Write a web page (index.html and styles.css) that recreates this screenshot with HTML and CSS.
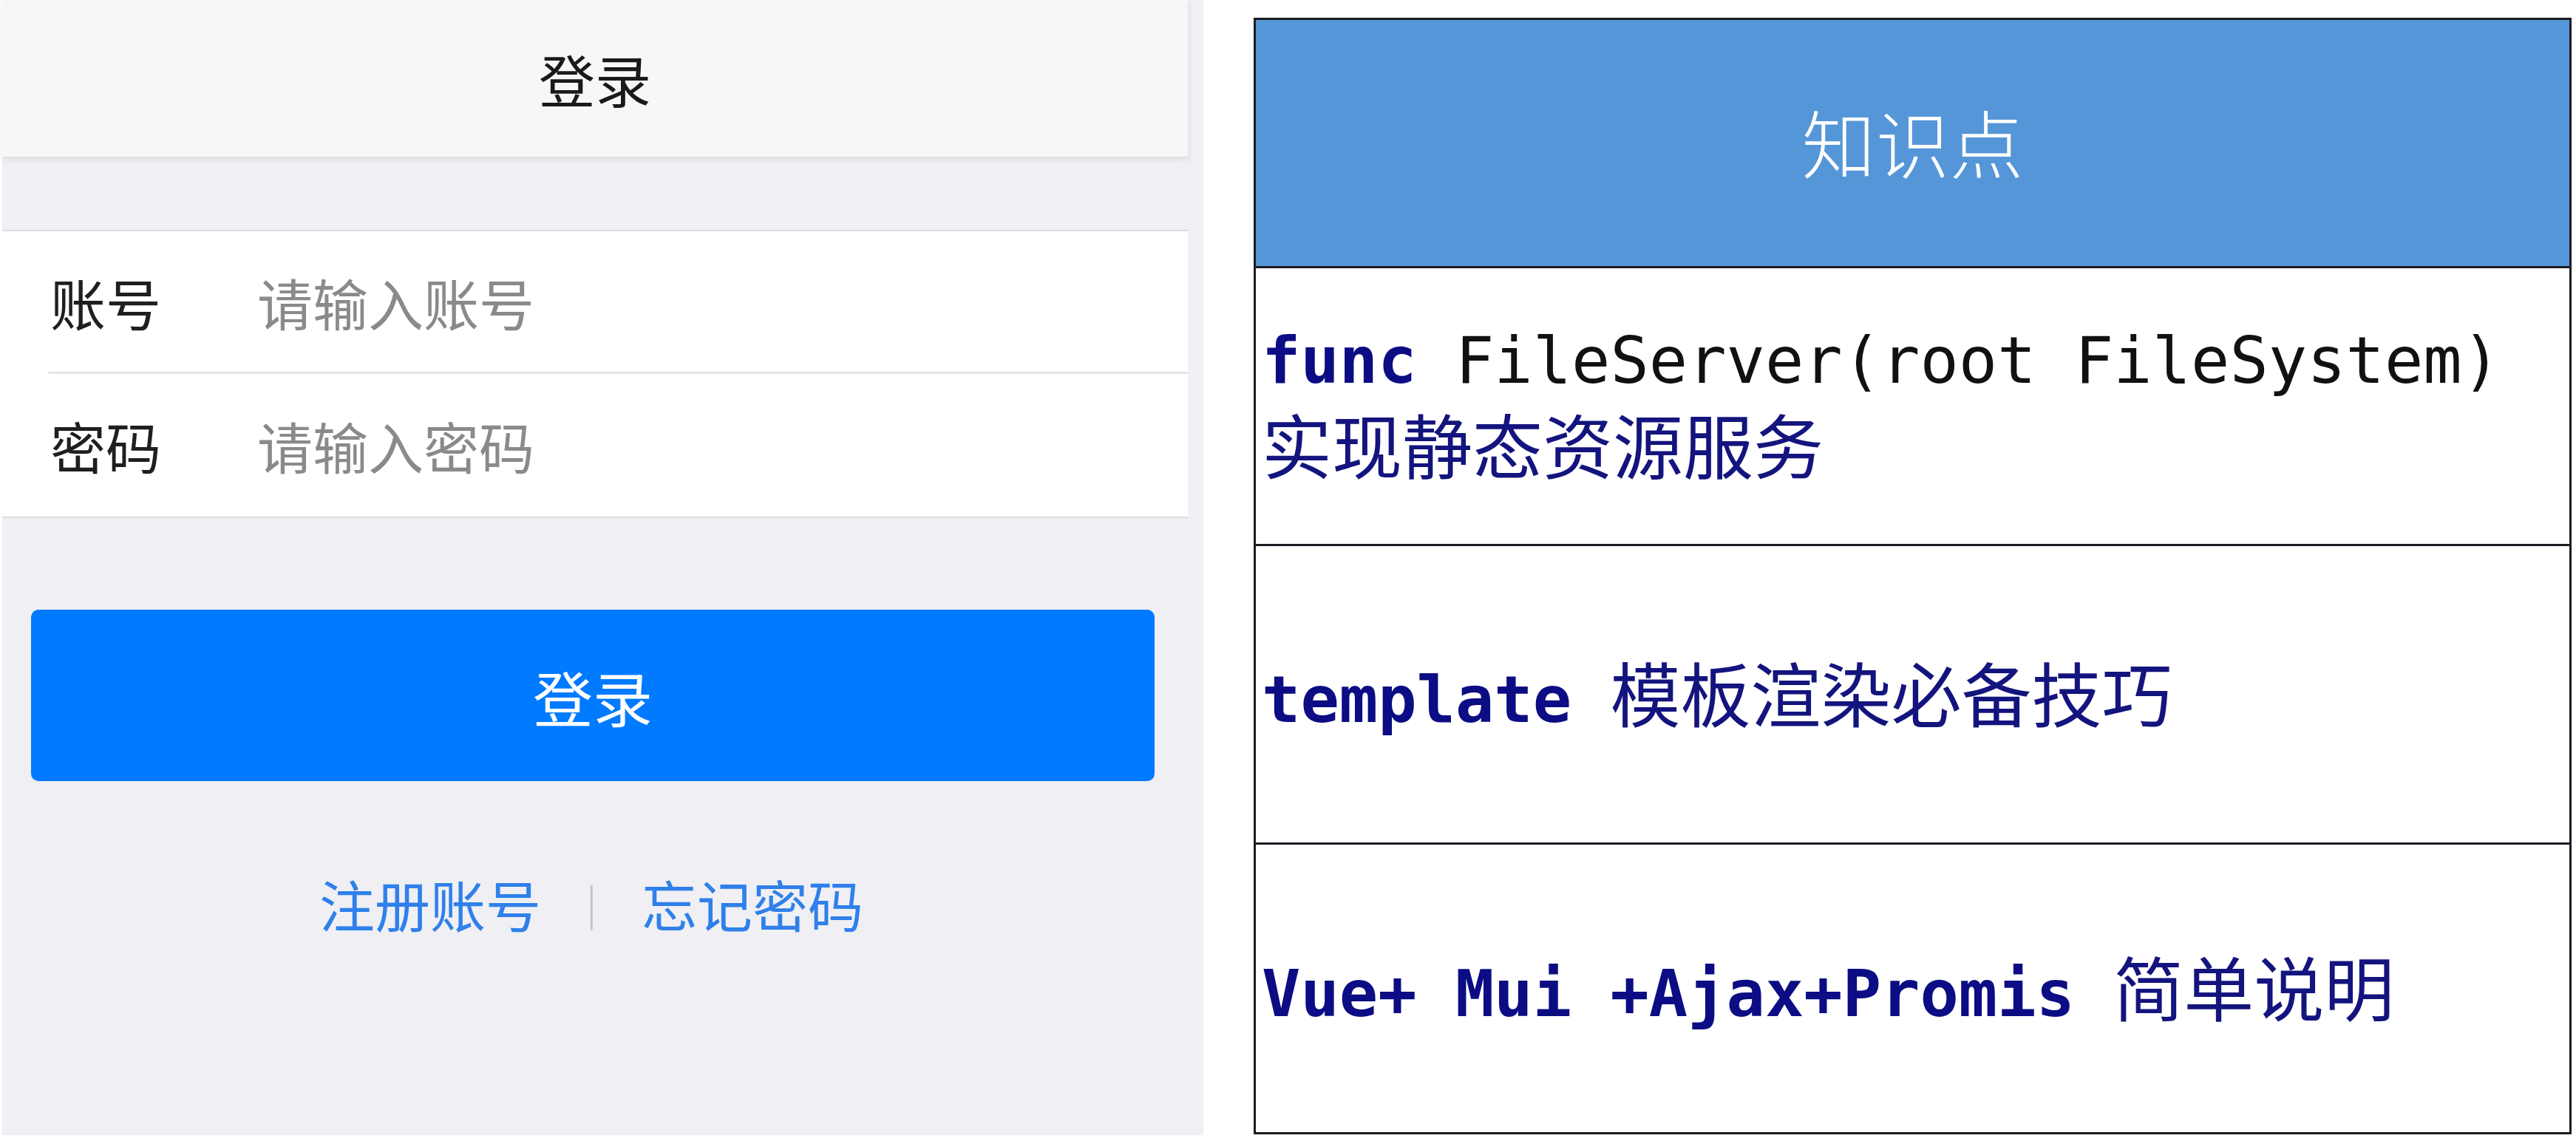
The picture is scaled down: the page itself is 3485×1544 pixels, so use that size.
FILE: index.html
```html
<!DOCTYPE html>
<html lang="zh-CN">
<head>
<meta charset="utf-8">
<title>登录</title>
<link rel="stylesheet" href="styles.css">
</head>
<body>
<div class="page">
  <section class="phone">
    <header class="bar"><h1 class="bar-title">登录</h1></header>
    <form class="form">
      <div class="group">
        <div class="row">
          <label class="row-label">账号</label>
          <input class="row-input" type="text" placeholder="请输入账号">
        </div>
        <div class="row row-last">
          <label class="row-label">密码</label>
          <input class="row-input" type="password" placeholder="请输入密码">
        </div>
      </div>
      <div class="actions">
        <button class="btn" type="button">登录</button>
      </div>
      <div class="links">
        <a class="link">注册账号</a>
        <span class="sep">|</span>
        <a class="link">忘记密码</a>
      </div>
    </form>
  </section>

  <section class="table">
    <div class="thead">知识点</div>
    <div class="cell cell-two">
      <div class="line"><b class="kw">func</b> <span class="code">FileServer(root FileSystem)</span></div>
      <div class="line zh">实现静态资源服务</div>
    </div>
    <div class="cell">
      <div class="line"><b class="kw">template</b> <span class="zh">模板渲染必备技巧</span></div>
    </div>
    <div class="cell">
      <div class="line"><b class="kw">Vue+ Mui +Ajax+Promis</b> <span class="zh">简单说明</span></div>
    </div>
  </section>
</div>
</body>
</html>
```

FILE: styles.css
```css
* { box-sizing: border-box; }

html, body {
  margin: 0;
  padding: 0;
  background: #ffffff;
}

body {
  width: 3485px;
  height: 1544px;
  overflow: hidden;
  font-family: "Noto Sans CJK SC", "Noto Sans", sans-serif;
}

.page {
  display: flex;
  align-items: flex-start;
  height: 1544px;
}

/* ---------- left: mobile login ---------- */
.phone {
  margin-left: 3px;
  width: 1625px;
  height: 1536px;
  background: #efeff4;
  padding-right: 21px;
  display: flex;
  flex-direction: column;
}

.bar {
  height: 212px;
  background: #f7f7f7;
  box-shadow: 0 3px 8px rgba(0, 0, 0, 0.10);
  display: flex;
  align-items: center;
  justify-content: center;
  position: relative;
  z-index: 1;
}

.bar-title {
  margin: 0;
  font-size: 76px;
  font-weight: 400;
  color: #1a1a1a;
  line-height: 1;
}

.form {
  margin: 0;
  padding-top: 99px;
  display: flex;
  flex-direction: column;
}

.group {
  background: #ffffff;
  border-top: 2px solid #dcdce0;
  border-bottom: 2px solid #dcdce0;
}

.row {
  height: 193px;
  display: flex;
  align-items: center;
  margin-left: 62px;
  border-bottom: 3px solid #e6e6ea;
}

.row-last { border-bottom: none; }

.row-label {
  width: 283px;
  padding-left: 3px;
  font-size: 75px;
  color: #1f1f1f;
  line-height: 1;
}

.row-input {
  flex: 1;
  border: none;
  outline: none;
  background: transparent;
  font-family: "Noto Sans CJK SC", "Noto Sans", sans-serif;
  font-size: 75px;
  color: #333;
  padding: 0;
  height: 100px;
}

.row-input::placeholder {
  color: #8a8a8a;
}

.actions {
  padding: 124px 45px 0 39px;
}

.btn {
  width: 100%;
  height: 232px;
  border: none;
  border-radius: 10px;
  background: #007aff;
  color: #ffffff;
  font-family: "Noto Sans CJK SC", "Noto Sans", sans-serif;
  font-size: 81px;
  line-height: 1;
  padding: 0;
}

.links {
  margin-top: 128px;
  display: flex;
  justify-content: center;
  align-items: center;
  gap: 58px;
  padding-right: 10px;
}

.link {
  font-size: 75px;
  color: #2f80ea;
  line-height: 1;
}

.sep {
  font-family: "DejaVu Sans", sans-serif;
  font-size: 60px;
  font-weight: 300;
  line-height: 1;
  color: #c4c4c8;
}

/* ---------- right: table ---------- */
.table {
  margin-left: 68px;
  margin-top: 24px;
  width: 1783px;
  height: 1511px;
  border: 3px solid #1c1c24;
  display: grid;
  grid-template-rows: 333px 376px 404px 1fr;
  background: #ffffff;
}

.thead {
  background: #5596d8;
  color: #ffffff;
  font-size: 100px;
  font-weight: 300;
  display: flex;
  align-items: center;
  justify-content: center;
  padding-bottom: 6px;
}

.cell {
  border-top: 3px solid #1c1c24;
  display: flex;
  flex-direction: column;
  justify-content: center;
  padding-left: 8px;
  padding-bottom: 8px;
  font-family: "DejaVu Sans Mono", "Liberation Mono", monospace;
  font-size: 87px;
  color: #000000;
  white-space: nowrap;
}

.line {
  height: 112px;
  line-height: 112px;
}

.cell-two {
  padding-bottom: 12px;
}

.kw {
  font-weight: 700;
  color: #0c0c84;
}

.code {
  color: #111111;
}

.zh {
  font-family: "Noto Sans CJK SC", "Noto Sans", sans-serif;
  font-size: 95px;
  font-weight: 400;
  color: #14147e;
}
```
